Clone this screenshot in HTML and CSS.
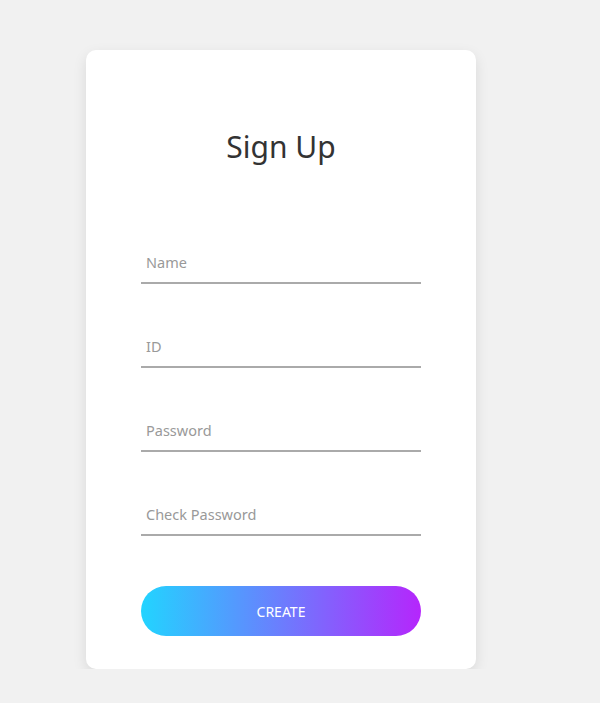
FILE: index.html
```html
<!DOCTYPE html>
<html lang="en">
<head>
    <meta charset="UTF-8">
    <meta name="viewport" content="width=device-width, initial-scale=1.0">
    <title>Sign Up</title>
    <link rel="stylesheet" href="styles.css">
</head>
<body>
    <div class="page">
        <!-- Sign up card -->
        <div class="card">
            <h1>Sign Up</h1>
            <form class="signup-form">
                <input type="text" name="name" placeholder="Name">
                <input type="text" name="id" placeholder="ID">
                <input type="password" name="password" placeholder="Password">
                <input type="password" name="password2" placeholder="Check Password">
                <button type="submit">CREATE</button>
            </form>
        </div>
    </div>
</body>
</html>
```

FILE: styles.css
```css
body {
    margin: 0;
    padding: 0;
    background-color: #f1f1f1;
    font-family: "Noto Sans", "Open Sans", sans-serif;
}
.page {
    padding: 50px 0 0 86px;
}
.card {
    width: 390px;
    box-sizing: border-box;
    padding: 76px 55px 33px;
    background-color: #fff;
    border-radius: 10px;
    box-shadow: 0 5px 14px rgba(0, 0, 0, 0.1);
}
.card h1 {
    margin: 0;
    font-size: 30px;
    font-weight: 400;
    line-height: 41px;
    color: #333;
    text-align: center;
}
.signup-form {
    display: flex;
    flex-direction: column;
    gap: 42px;
    margin-top: 75px;
}
.signup-form input {
    height: 42px;
    box-sizing: border-box;
    padding: 0 5px;
    border: none;
    border-bottom: 2px solid #aaa;
    outline: none;
    font-family: inherit;
    font-size: 14.5px;
    color: #333;
}
.signup-form input::placeholder {
    color: #999;
}
.signup-form button {
    height: 50px;
    margin-top: 8px;
    border: none;
    border-radius: 25px;
    background: linear-gradient(to right, #22d4ff, #b526fc);
    color: #fff;
    font-family: inherit;
    font-size: 14px;
    cursor: pointer;
}
```
